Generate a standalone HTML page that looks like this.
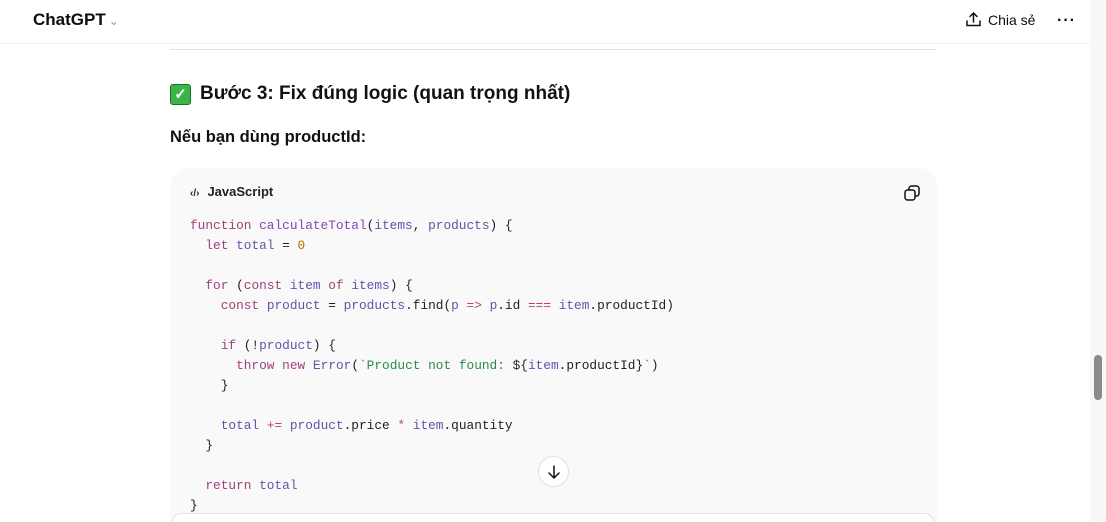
<!DOCTYPE html>
<html><head><meta charset="utf-8"><style>
*{margin:0;padding:0;box-sizing:border-box}
html,body{width:1106px;height:522px;overflow:hidden}
body{background:#fff;font-family:"Liberation Sans",sans-serif;color:#0d0d0d;position:relative}
.top{position:absolute;left:0;top:0;width:1090px;height:44px;border-bottom:1px solid #f0f0f0;background:#fff}
.brand{position:absolute;left:33px;top:10px;font-size:17px;font-weight:bold}
.brand span{font-weight:normal;color:#999;font-size:12px;margin-left:3px}
.share{position:absolute;left:965px;top:11px;font-size:14px;display:flex;align-items:center;gap:6px}
.dots{position:absolute;left:1057px;top:12px;font-size:16px;letter-spacing:1px;font-weight:bold}
.hr{position:absolute;left:170px;top:49px;width:767px;height:1px;background:#e3e3e3}
h3{position:absolute;left:170px;top:83px;font-size:19px;font-weight:bold;display:flex;align-items:center;gap:9px;color:#111}
.chk{width:21px;height:21px;background:#3bb54a;border:1.5px solid #1f6f2a;border-radius:3px;color:#fff;font-size:15px;display:flex;align-items:center;justify-content:center}
.p{position:absolute;left:170px;top:128px;font-size:16.5px;font-weight:bold;color:#111}
.code{position:absolute;left:170px;top:168px;width:767px;height:380px;background:#f9f9f9;border-radius:18px}
.lang{position:absolute;left:20px;top:16px;font-size:13px;font-weight:bold;color:#222}
.copy{position:absolute;left:733px;top:16px}
pre{position:absolute;left:20px;top:48px;font-family:"Liberation Mono",monospace;font-size:12.8px;line-height:20px;color:#1f1f1f}
.k{color:#a0427a}.f{color:#8446b0}.v{color:#6a4fa8}.n{color:#b66b00}.s{color:#2c8a4f}.o{color:#c0406a}
.scroll{position:absolute;left:1090px;top:0;width:16px;height:522px;background:#f8f8f8}
.thumb{position:absolute;left:1094px;top:355px;width:8px;height:45px;background:#8a8a8a;border-radius:4px}
.down{position:absolute;left:538px;top:456px;width:31px;height:31px;border-radius:50%;background:#fff;border:1px solid #e0e0e0;display:flex;align-items:center;justify-content:center}
.input{position:absolute;left:172px;top:513px;width:762px;height:9px;background:#fff;border:1px solid #e3e3e3;border-bottom:none;border-radius:20px 20px 0 0}
</style></head><body>
<div class="top">
<div class="brand">ChatGPT<span>⌄</span></div>
<div class="share"><svg width="17" height="17" viewBox="0 0 17 17" fill="none" stroke="#111" stroke-width="1.5" stroke-linecap="round"><path d="M8.5 11V2M5 5.5l3.5-3.5 3.5 3.5M2 10v4.5h13V10"/></svg>Chia sẻ</div>
<div class="dots">···</div>
</div>
<div class="hr"></div>
<h3><span class="chk">✓</span>Bước 3: Fix đúng logic (quan trọng nhất)</h3>
<div class="p">Nếu bạn dùng productId:</div>
<div class="code">
<div class="lang"><span style="font-size:10px;margin-right:8px">‹/›</span>JavaScript</div>
<svg class="copy" width="18" height="18" viewBox="0 0 18 18" fill="none" stroke="#111" stroke-width="1.5"><rect x="2" y="6" width="10" height="10" rx="2.5"/><path d="M6 6V4.5A2.5 2.5 0 0 1 8.5 2h5A2.5 2.5 0 0 1 16 4.5v5a2.5 2.5 0 0 1-2.5 2.5H12"/></svg>
<pre><span class="k">function</span> <span class="f">calculateTotal</span>(<span class="v">items</span>, <span class="v">products</span>) {
  <span class="k">let</span> <span class="v">total</span> = <span class="n">0</span>

  <span class="k">for</span> (<span class="k">const</span> <span class="v">item</span> <span class="k">of</span> <span class="v">items</span>) {
    <span class="k">const</span> <span class="v">product</span> = <span class="v">products</span>.find(<span class="v">p</span> <span class="o">=&gt;</span> <span class="v">p</span>.id <span class="o">===</span> <span class="v">item</span>.productId)

    <span class="k">if</span> (!<span class="v">product</span>) {
      <span class="k">throw</span> <span class="k">new</span> <span class="v">Error</span>(<span class="s">`Product not found: </span>${<span class="v">item</span>.productId}<span class="s">`</span>)
    }

    <span class="v">total</span> <span class="o">+=</span> <span class="v">product</span>.price <span class="o">*</span> <span class="v">item</span>.quantity
  }

  <span class="k">return</span> <span class="v">total</span>
}</pre>
</div>
<div class="down"><svg width="16" height="16" viewBox="0 0 16 16" fill="none" stroke="#111" stroke-width="1.5" stroke-linecap="round"><path d="M8 2v12M3 9l5 5 5-5"/></svg></div>
<div class="input"></div>
<div class="scroll"></div><div class="thumb"></div>
</body></html>
